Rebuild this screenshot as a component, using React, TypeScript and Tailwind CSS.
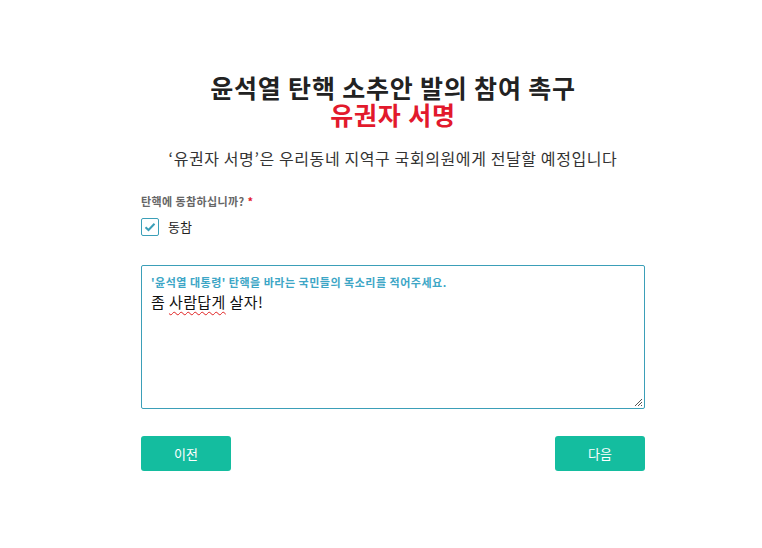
import React from 'react';

const font = { fontFamily: '"Noto Sans CJK KR", "Noto Sans", sans-serif' };

function CheckBox() {
  return (
    <span className="flex h-[18px] w-[18px] items-center justify-center rounded-[2px] border border-[#3b9fb8] bg-white">
      <svg width="12" height="10" viewBox="0 0 12 10" fill="none">
        <path d="M1.5 5.2 L4.5 8 L10.5 1.8" stroke="#3b9fb8" strokeWidth="2" />
      </svg>
    </span>
  );
}

export default function App() {
  return (
    <div className="min-h-[548px] w-full bg-white text-[#222]" style={font}>
      <div className="ml-[141px] w-[504px] pt-[74px]">
        {/* Title */}
        <h1 className="text-center text-[25px] font-bold tracking-[0.8px] text-[#222]">
          <div className="leading-[27px]">윤석열 탄핵 소추안 발의 참여 촉구</div>
          <div className="leading-[27px] text-[#e2192c]">유권자 서명</div>
        </h1>

        {/* Subtitle */}
        <p className="mt-[19px] text-center text-[16px] leading-[22px] tracking-[0.6px] text-[#333]">
          ‘유권자 서명’은 우리동네 지역구 국회의원에게 전달할 예정입니다
        </p>

        {/* Question */}
        <div className="mt-[24px] text-[11px] font-semibold leading-[16px] tracking-[0.4px] text-[#666]">
          탄핵에 동참하십니까? <span className="text-[#e2192c]">*</span>
        </div>
        <label className="mt-[9px] flex items-center gap-[9px]">
          <CheckBox />
          <span className="text-[13px] leading-[18px] text-[#222]">동참</span>
        </label>

        {/* Message box */}
        <div className="relative mt-[29px] h-[144px] rounded-[2px] border border-[#3b9fb8] px-[9px] pt-[8px]">
          <div className="text-[11px] font-semibold leading-[16px] tracking-[0.5px] text-[#3da6c6]">
            '윤석열 대통령' 탄핵을 바라는 국민들의 목소리를 적어주세요.
          </div>
          <div className="mt-[2px] text-[15px] leading-[20px] tracking-[0.4px] text-[#111]">
            좀 <span className="underline decoration-wavy decoration-[#e02020] decoration-1 underline-offset-[3px]">사람답게</span> 살자!
          </div>
          <svg className="absolute bottom-[1px] right-[1px]" width="10" height="10" viewBox="0 0 10 10">
            <path d="M9 2 L2 9 M9 5 L5 9 M9 8 L8 9" stroke="#555" strokeWidth="1" />
          </svg>
        </div>

        {/* Buttons */}
        <div className="mt-[27px] flex justify-between">
          <button className="h-[35px] w-[90px] rounded-[3px] bg-[#14bd9f] text-[13px] text-white">이전</button>
          <button className="h-[35px] w-[90px] rounded-[3px] bg-[#14bd9f] text-[13px] text-white">다음</button>
        </div>
      </div>
    </div>
  );
}
